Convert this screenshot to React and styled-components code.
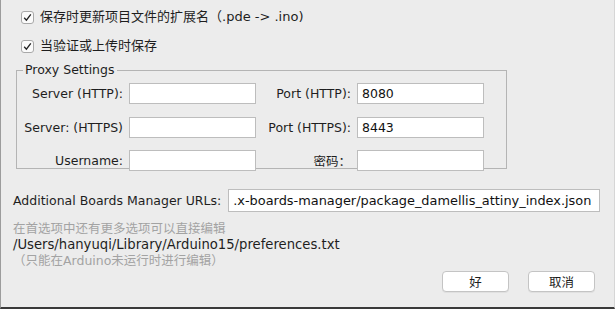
import React from 'react';
import styled, { createGlobalStyle } from 'styled-components';

const font = `"DejaVu Sans", "Noto Sans CJK SC", sans-serif`;

const GlobalStyle = createGlobalStyle`
  html, body {
    margin: 0;
    padding: 0;
    background: #ececec;
  }
  body {
    font-family: ${font};
    font-size: 12.5px;
    color: #1e1e1e;
  }
`;

const Frame = styled.div`
  width: 615px;
  height: 309px;
  box-sizing: border-box;
  background: #ececec;
  border-left: 1px solid #9c9c9c;
  border-right: 1px solid #d6d6d6;
  border-bottom: 2px solid #3a3a3a;
  display: flex;
  flex-direction: column;
  overflow: hidden;
`;

const CheckRow = styled.label`
  display: flex;
  align-items: center;
  gap: 6px;
  height: 14px;
  margin: ${p => p.$top}px 0 0 20px;
  line-height: 14px;
  font-size: 13px;
  white-space: nowrap;
`;

const Box = styled.span`
  width: 13px;
  height: 13px;
  box-sizing: border-box;
  border: 1px solid #a9a9a9;
  border-radius: 3px;
  background: #fbfbfb;
  display: flex;
  align-items: center;
  justify-content: center;
`;

const Fieldset = styled.fieldset`
  margin: 11px 0 0 15px;
  width: 491px;
  height: 105px;
  min-inline-size: 0;
  box-sizing: border-box;
  border: 1px solid #b4b4b4;
  padding: 7px 22px 0 0;
  display: grid;
  grid-template-columns: 106px 127px 89px 127px;
  column-gap: 6px;
  row-gap: 12.5px;
  align-content: start;
`;

const Legend = styled.legend`
  padding: 0 3px 0 2px;
  margin-left: 6px;
  line-height: 12px;
  font-size: 12.5px;
  color: #1e1e1e;
`;

const FieldLabel = styled.span`
  text-align: right;
  align-self: center;
  white-space: nowrap;
`;

const Input = styled.input`
  height: ${p => (p.$tall ? 23 : 21)}px;
  width: ${p => (p.$w ? p.$w + 'px' : 'auto')};
  min-width: 0;
  box-sizing: border-box;
  border: 1px solid #bdbdbd;
  background: #fff;
  margin: 0;
  padding: 0 3px 0 4px;
  font-family: ${font};
  font-size: ${p => (p.$tall ? 12.9 : 12.5)}px;
  color: #111;
  outline: none;
`;

const UrlRow = styled.div`
  display: flex;
  align-items: center;
  gap: 7px;
  margin: 20px 0 0 12px;
`;

const Notes = styled.div`
  margin: 9px 0 0 12px;
  display: flex;
  flex-direction: column;
  line-height: 16px;
`;

const Note = styled.span`
  color: ${p => (p.$muted ? '#a3a3a3' : '#1e1e1e')};
  font-size: ${p => (p.$muted ? 12.5 : 13.2)}px;
  white-space: nowrap;
`;

const Buttons = styled.div`
  display: flex;
  justify-content: flex-end;
  gap: 19px;
  margin: 2px 19px 0 0;
`;

const Button = styled.button`
  width: 67px;
  height: 21px;
  box-sizing: border-box;
  border: 1px solid #c4c4c4;
  border-radius: 4px;
  background: #fff;
  font-family: ${font};
  font-size: 12.5px;
  color: #1e1e1e;
  padding: 0;
  box-shadow: 0 1px 0 rgba(0, 0, 0, 0.05);
`;

const Check = () => (
  <Box>
    <svg width="9" height="9" viewBox="0 0 9 9">
      <path d="M1.2 4.8 L3.4 7.2 L7.8 1.4" fill="none" stroke="#222" strokeWidth="1.3" />
    </svg>
  </Box>
);

export default function App() {
  return (
    <>
      <GlobalStyle />
      <Frame>
        <CheckRow $top={10}>
          <Check />
          保存时更新项目文件的扩展名（.pde -&gt; .ino)
        </CheckRow>
        <CheckRow $top={15}>
          <Check />
          当验证或上传时保存
        </CheckRow>
        <Fieldset>
          <Legend>Proxy Settings</Legend>
          <FieldLabel>Server (HTTP):</FieldLabel>
          <Input readOnly value="" />
          <FieldLabel>Port (HTTP):</FieldLabel>
          <Input readOnly value="8080" />
          <FieldLabel>Server: (HTTPS)</FieldLabel>
          <Input readOnly value="" />
          <FieldLabel>Port (HTTPS):</FieldLabel>
          <Input readOnly value="8443" />
          <FieldLabel>Username:</FieldLabel>
          <Input readOnly value="" />
          <FieldLabel>密码：</FieldLabel>
          <Input readOnly value="" />
        </Fieldset>
        <UrlRow>
          <span>Additional Boards Manager URLs:</span>
          <Input $tall $w={372} readOnly value=".x-boards-manager/package_damellis_attiny_index.json" />
        </UrlRow>
        <Notes>
          <Note $muted>在首选项中还有更多选项可以直接编辑</Note>
          <Note>/Users/hanyuqi/Library/Arduino15/preferences.txt</Note>
          <Note $muted>（只能在Arduino未运行时进行编辑）</Note>
        </Notes>
        <Buttons>
          <Button>好</Button>
          <Button>取消</Button>
        </Buttons>
      </Frame>
    </>
  );
}
